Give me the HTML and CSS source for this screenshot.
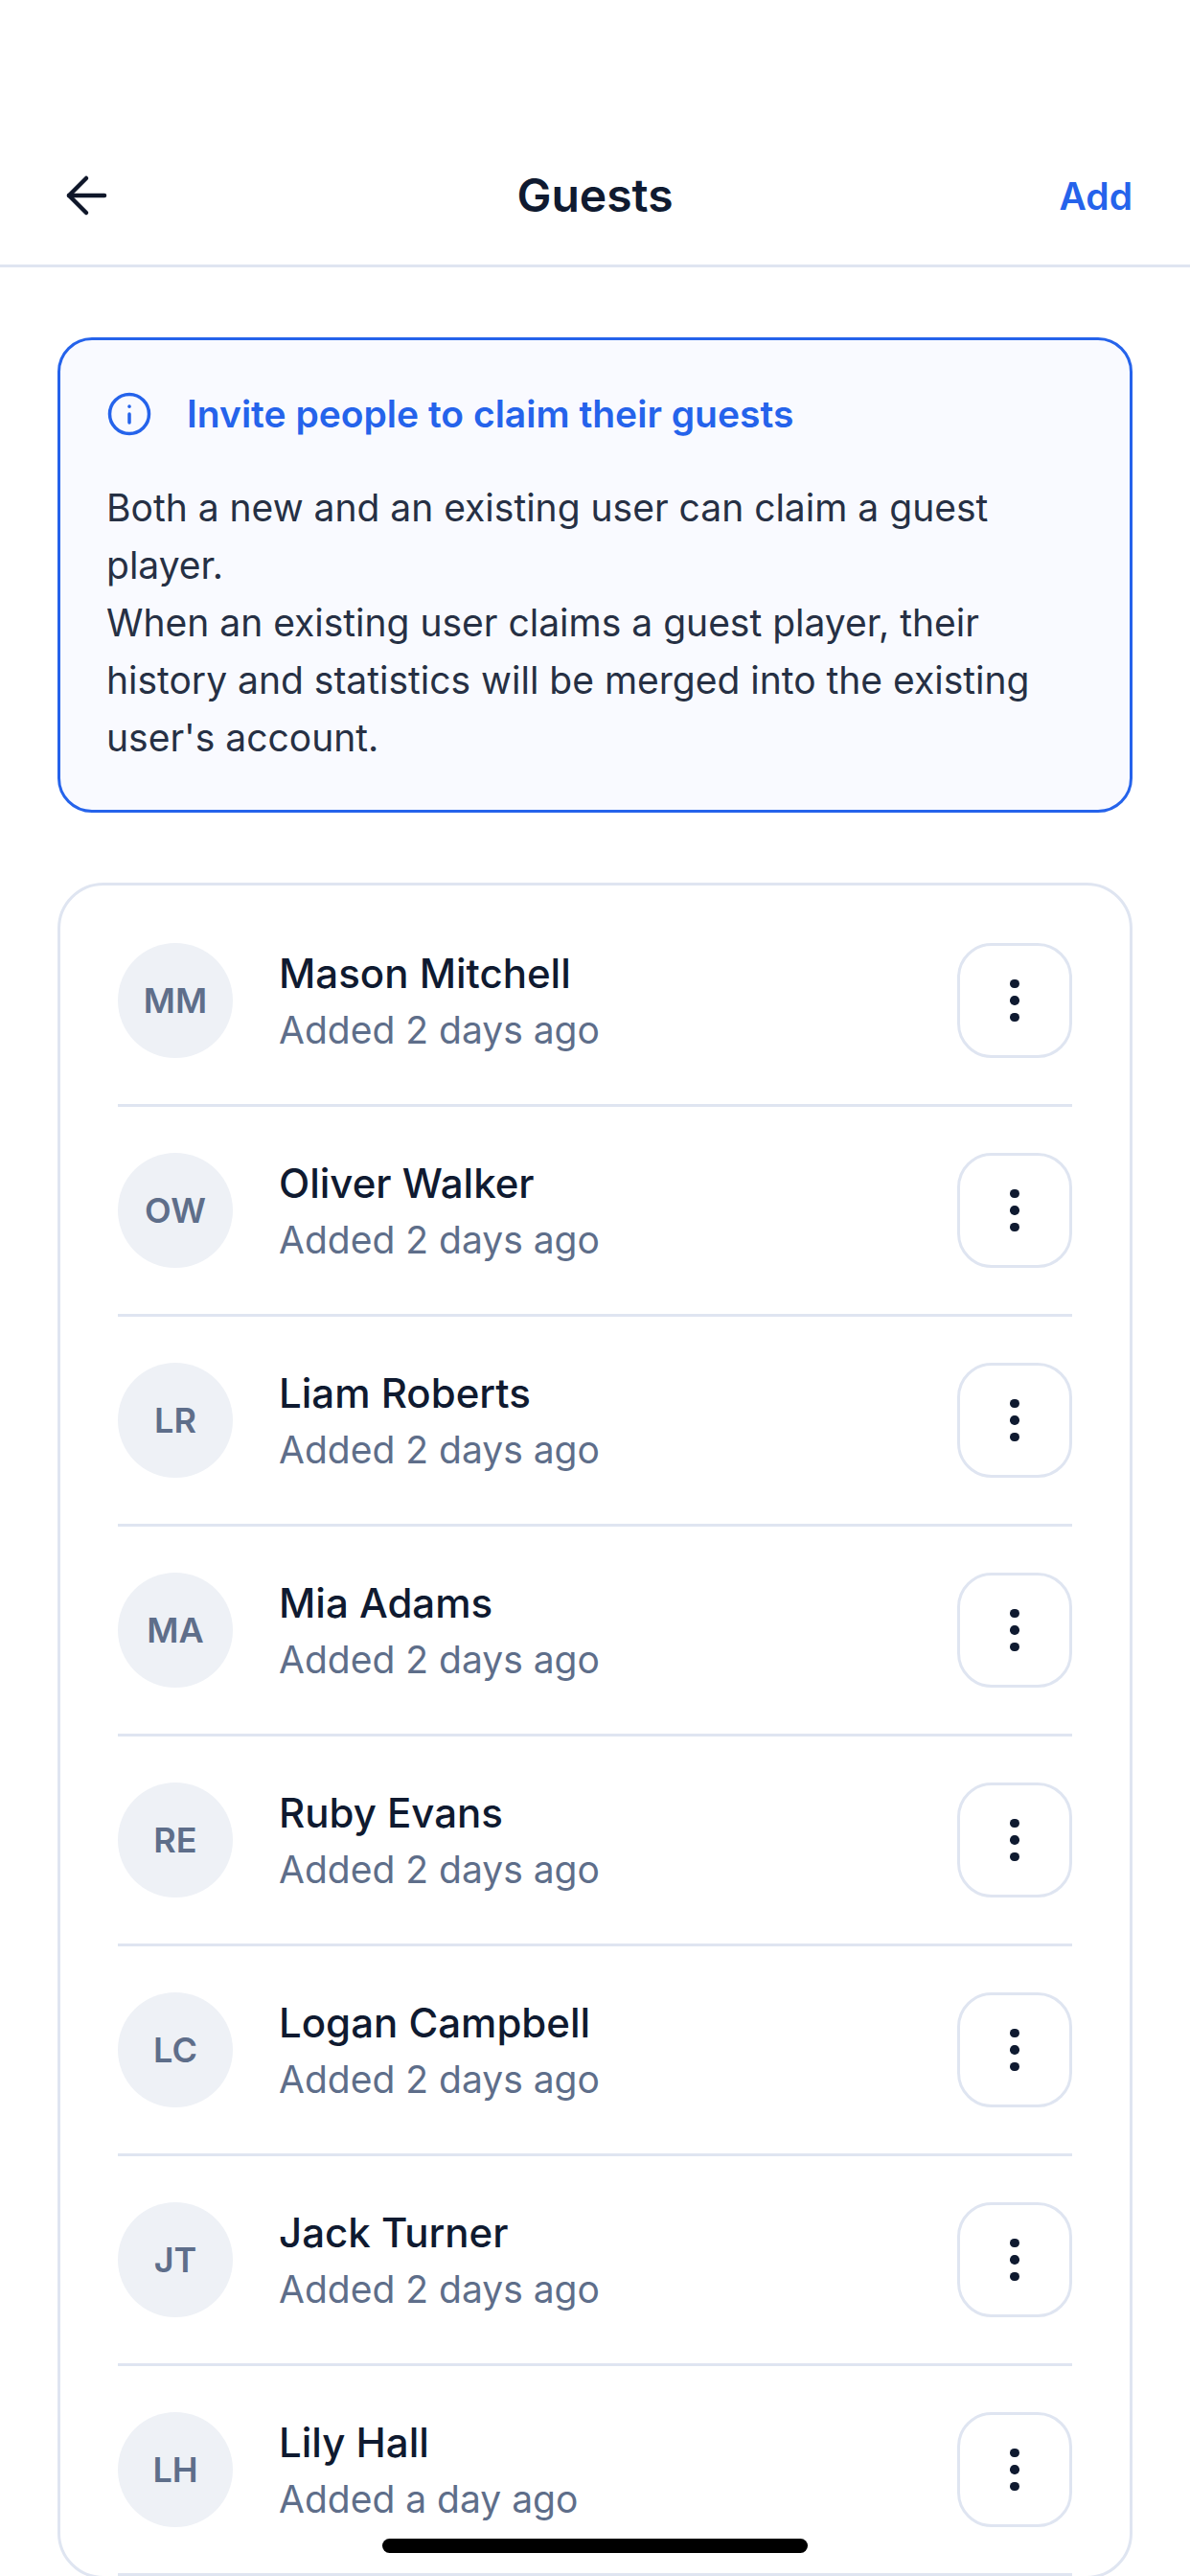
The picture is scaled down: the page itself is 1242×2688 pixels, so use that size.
FILE: index.html
```html
<!DOCTYPE html>
<html lang="en">
<head>
    <meta charset="UTF-8">
    <meta name="viewport" content="width=device-width, initial-scale=1.0">
    <title>Guests</title>
    <link rel="stylesheet" href="styles.css">
</head>
<body>
    <div id="screen">
        <div class="header">
            <div class="header-side">
                <svg class="back-icon" viewBox="0 0 48 48" fill="none" stroke="#0f172a" stroke-width="4.5" stroke-linecap="round" stroke-linejoin="round">
                    <path d="M43 24H6"/>
                    <path d="M24 6L6 24l18 18"/>
                </svg>
            </div>
            <div class="title">Guests</div>
            <div class="header-side add">Add</div>
        </div>

        <div class="content">
            <div class="notice">
                <div class="notice-head">
                    <svg class="info-icon" viewBox="0 0 48 48" fill="none" stroke="#2563eb" stroke-width="3.5" stroke-linecap="round">
                        <circle cx="24" cy="24" r="20.5"/>
                        <path d="M24 24v9"/>
                        <path d="M24 16v.2"/>
                    </svg>
                    <span>Invite people to claim their guests</span>
                </div>
                <p>Both a new and an existing user can claim a guest player.<br>When an existing user claims a guest player, their history and statistics will be merged into the existing user's account.</p>
            </div>

            <ul class="guests">
                <li class="guest">
                    <div class="avatar">MM</div>
                    <div class="info"><div class="name">Mason Mitchell</div><div class="added">Added 2 days ago</div></div>
                    <div class="more"><i></i><i></i><i></i></div>
                </li>
                <li class="guest">
                    <div class="avatar">OW</div>
                    <div class="info"><div class="name">Oliver Walker</div><div class="added">Added 2 days ago</div></div>
                    <div class="more"><i></i><i></i><i></i></div>
                </li>
                <li class="guest">
                    <div class="avatar">LR</div>
                    <div class="info"><div class="name">Liam Roberts</div><div class="added">Added 2 days ago</div></div>
                    <div class="more"><i></i><i></i><i></i></div>
                </li>
                <li class="guest">
                    <div class="avatar">MA</div>
                    <div class="info"><div class="name">Mia Adams</div><div class="added">Added 2 days ago</div></div>
                    <div class="more"><i></i><i></i><i></i></div>
                </li>
                <li class="guest">
                    <div class="avatar">RE</div>
                    <div class="info"><div class="name">Ruby Evans</div><div class="added">Added 2 days ago</div></div>
                    <div class="more"><i></i><i></i><i></i></div>
                </li>
                <li class="guest">
                    <div class="avatar">LC</div>
                    <div class="info"><div class="name">Logan Campbell</div><div class="added">Added 2 days ago</div></div>
                    <div class="more"><i></i><i></i><i></i></div>
                </li>
                <li class="guest">
                    <div class="avatar">JT</div>
                    <div class="info"><div class="name">Jack Turner</div><div class="added">Added 2 days ago</div></div>
                    <div class="more"><i></i><i></i><i></i></div>
                </li>
                <li class="guest">
                    <div class="avatar">LH</div>
                    <div class="info"><div class="name">Lily Hall</div><div class="added">Added a day ago</div></div>
                    <div class="more"><i></i><i></i><i></i></div>
                </li>
            </ul>
        </div>

        <div class="home-bar"></div>
    </div>
</body>
</html>
```

FILE: styles.css
```css
*{
    margin: 0;
    padding: 0;
    box-sizing: border-box;
}
html,body{
    height: 100%;
    overflow: hidden;
    background: #fff;
}
ul{
    list-style: none;
}
#screen{
    position: relative;
    width: 1242px;
    height: 2688px;
    overflow: hidden;
    font-family: Inter, "Liberation Sans", sans-serif;
    color: #0f1a30;
}

.header{
    height: 279px;
    padding: 132px 60px 0;
    border-bottom: 3px solid #dfe5f1;
    display: flex;
    align-items: center;
}
.header-side{
    flex: 1;
    display: flex;
}
.back-icon{
    width: 48px;
    height: 48px;
    margin-left: 6px;
}
.title{
    font-size: 48px;
    font-weight: 600;
    line-height: 72px;
}
.add{
    justify-content: flex-end;
    font-size: 39px;
    font-weight: 600;
    color: #2563eb;
}

.content{
    padding: 73px 60px 0;
}
.notice{
    height: 496px;
    padding: 47px 48px 0 48px;
    background: #f9faff;
    border: 3px solid #2563eb;
    border-radius: 36px;
}
.notice-head{
    display: flex;
    align-items: center;
    gap: 36px;
    font-size: 39px;
    font-weight: 600;
    line-height: 60px;
    color: #2563eb;
}
.info-icon{
    width: 48px;
    height: 48px;
}
.notice p{
    margin-top: 38px;
    font-size: 39px;
    line-height: 60px;
    color: #263044;
}

.guests{
    margin-top: 73px;
    padding: 12px 60px 0;
    border: 3px solid #dfe5f1;
    border-radius: 48px;
}
.guest{
    display: flex;
    align-items: center;
    padding: 48px 0;
    border-bottom: 3px solid #dfe5f1;
}
.avatar{
    width: 120px;
    height: 120px;
    border-radius: 50%;
    background: #eef1f6;
    display: flex;
    align-items: center;
    justify-content: center;
    font-size: 36px;
    font-weight: 600;
    color: #5e6e8a;
}
.info{
    flex: 1;
    height: 120px;
    margin-left: 48px;
    padding-top: 2px;
}
.name{
    font-size: 42px;
    font-weight: 500;
    line-height: 60px;
}
.added{
    font-size: 39px;
    line-height: 58px;
    color: #5e6e8a;
}
.more{
    width: 120px;
    height: 120px;
    border: 3px solid #dfe5f1;
    border-radius: 36px;
    display: flex;
    flex-direction: column;
    align-items: center;
    justify-content: center;
    gap: 8px;
}
.more i{
    width: 9.5px;
    height: 9.5px;
    border-radius: 50%;
    background: #0f1a30;
}

.home-bar{
    position: absolute;
    left: 399px;
    top: 2649px;
    width: 444px;
    height: 15px;
    border-radius: 8px;
    background: #000;
}
```
